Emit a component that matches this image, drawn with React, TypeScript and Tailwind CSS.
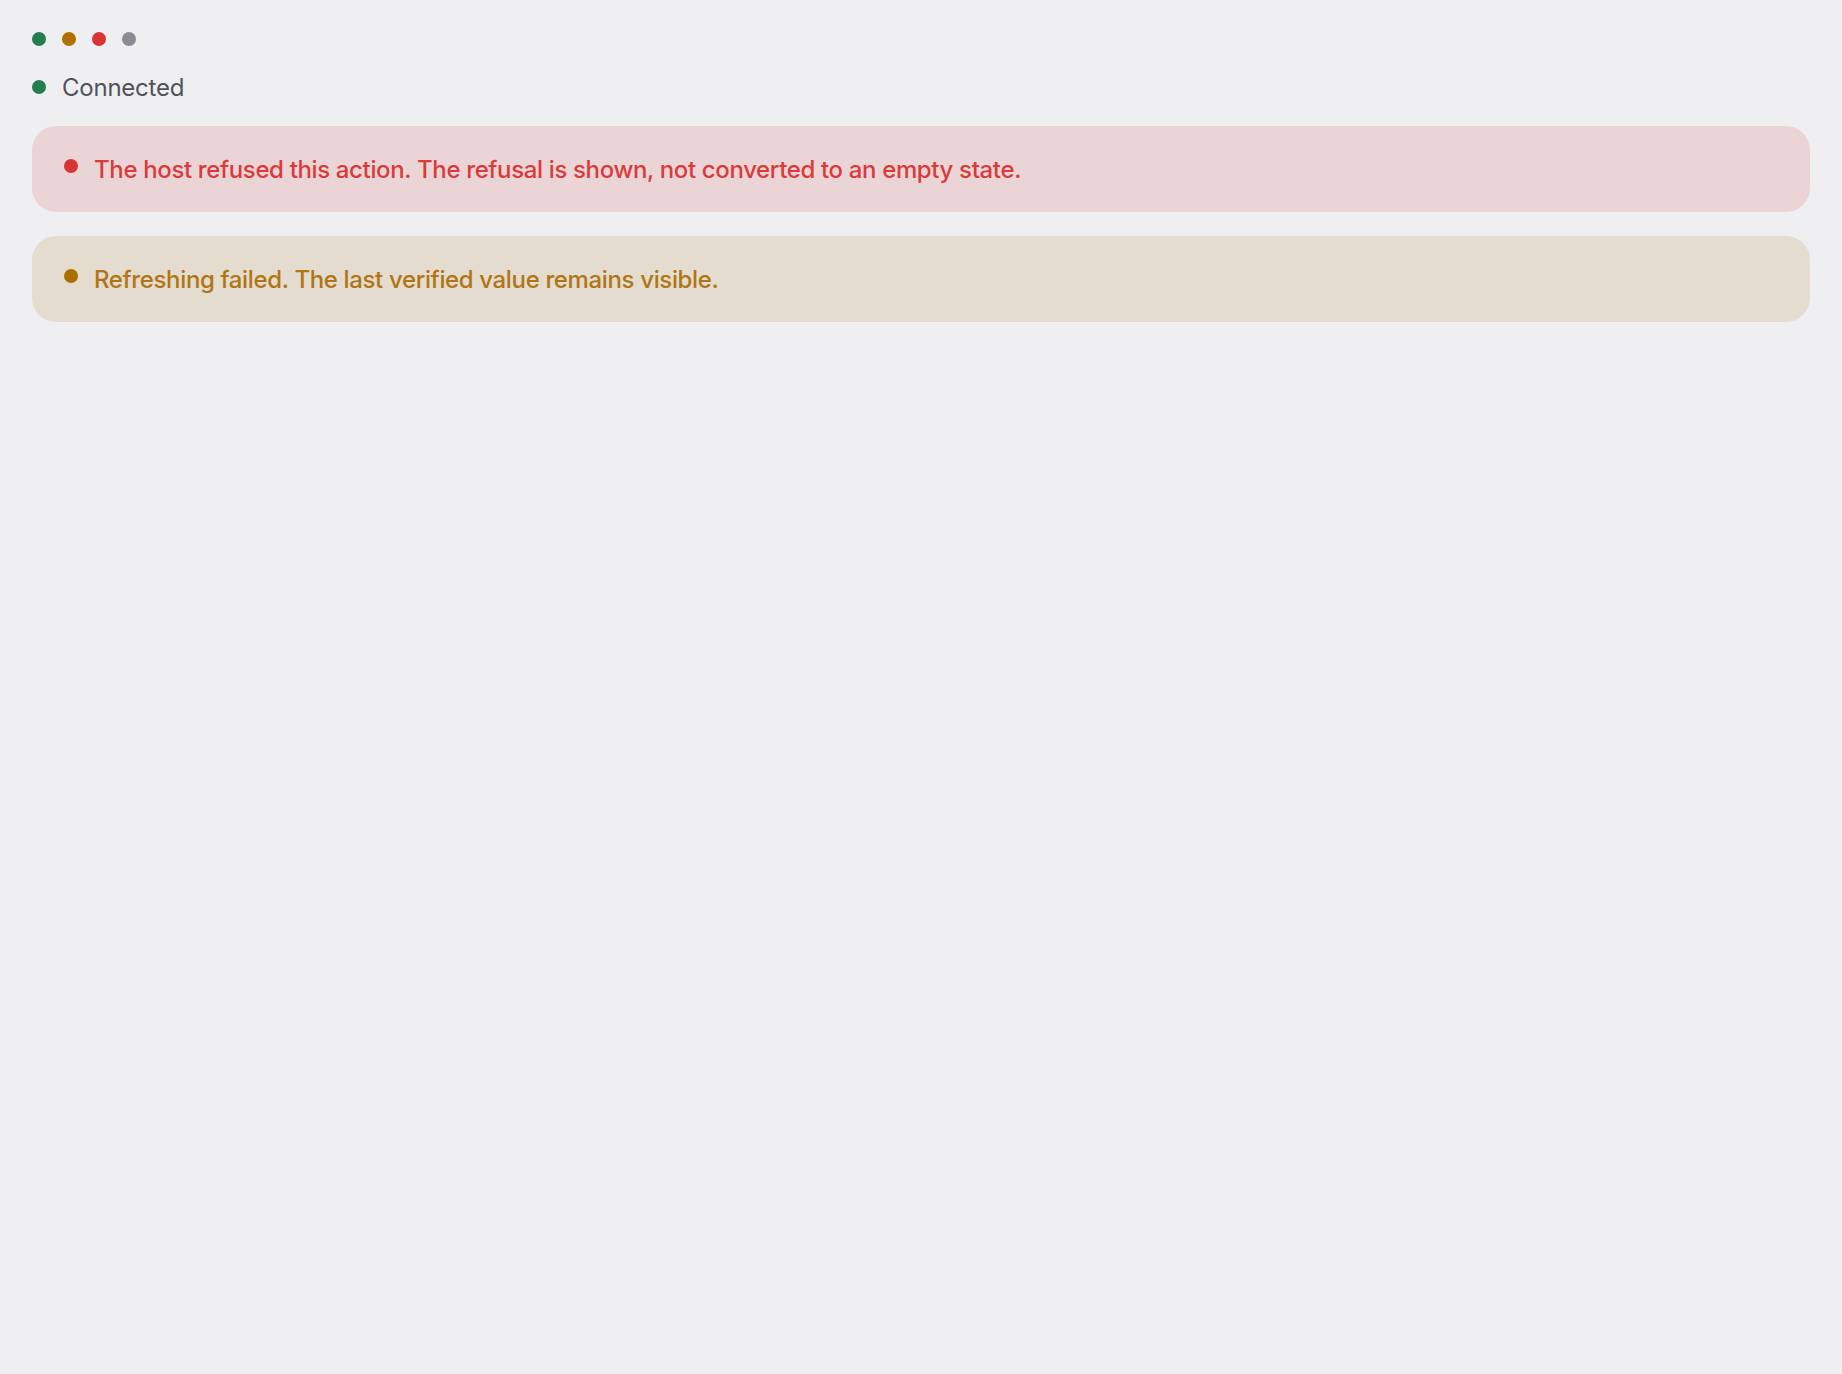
export default function App() {
  const dots = ['bg-[#23804c]', 'bg-[#b07000]', 'bg-[#d93434]', 'bg-[#8b8b91]'];

  return (
    <div
      className="min-h-screen bg-[#efeff1] p-8 flex flex-col"
      style={{ fontFamily: 'Inter, "Noto Sans", sans-serif' }}
    >
      {/* Legend */}
      <div className="flex items-center gap-4">
        {dots.map((c) => (
          <span key={c} className={`h-[14px] w-[14px] rounded-full ${c}`} />
        ))}
      </div>

      {/* Status */}
      <div className="mt-[26px] flex items-center gap-4">
        <span className="h-[14px] w-[14px] rounded-full bg-[#23804c]" />
        <span className="pt-[2px] text-[24px] leading-[28px] tracking-[-0.01em] text-[#52525a]">
          Connected
        </span>
      </div>

      {/* Alerts */}
      <div className="mt-6 flex flex-col gap-6">
        <div className="flex items-start gap-4 rounded-3xl bg-[#ead4d6] px-8 pt-[27px] pb-[25px]">
          <span className="mt-[6px] h-[14px] w-[14px] shrink-0 rounded-full bg-[#d93434]" />
          <p className="text-[24px] leading-[34px] font-medium tracking-[-0.015em] text-[#d93b3b]">
            The host refused this action. The refusal is shown, not converted to an empty state.
          </p>
        </div>
        <div className="flex items-start gap-4 rounded-3xl bg-[#e4dccf] px-8 pt-[27px] pb-[25px]">
          <span className="mt-[6px] h-[14px] w-[14px] shrink-0 rounded-full bg-[#ad6e00]" />
          <p className="text-[24px] leading-[34px] font-medium tracking-[-0.015em] text-[#b07514]">
            Refreshing failed. The last verified value remains visible.
          </p>
        </div>
      </div>
    </div>
  );
}
